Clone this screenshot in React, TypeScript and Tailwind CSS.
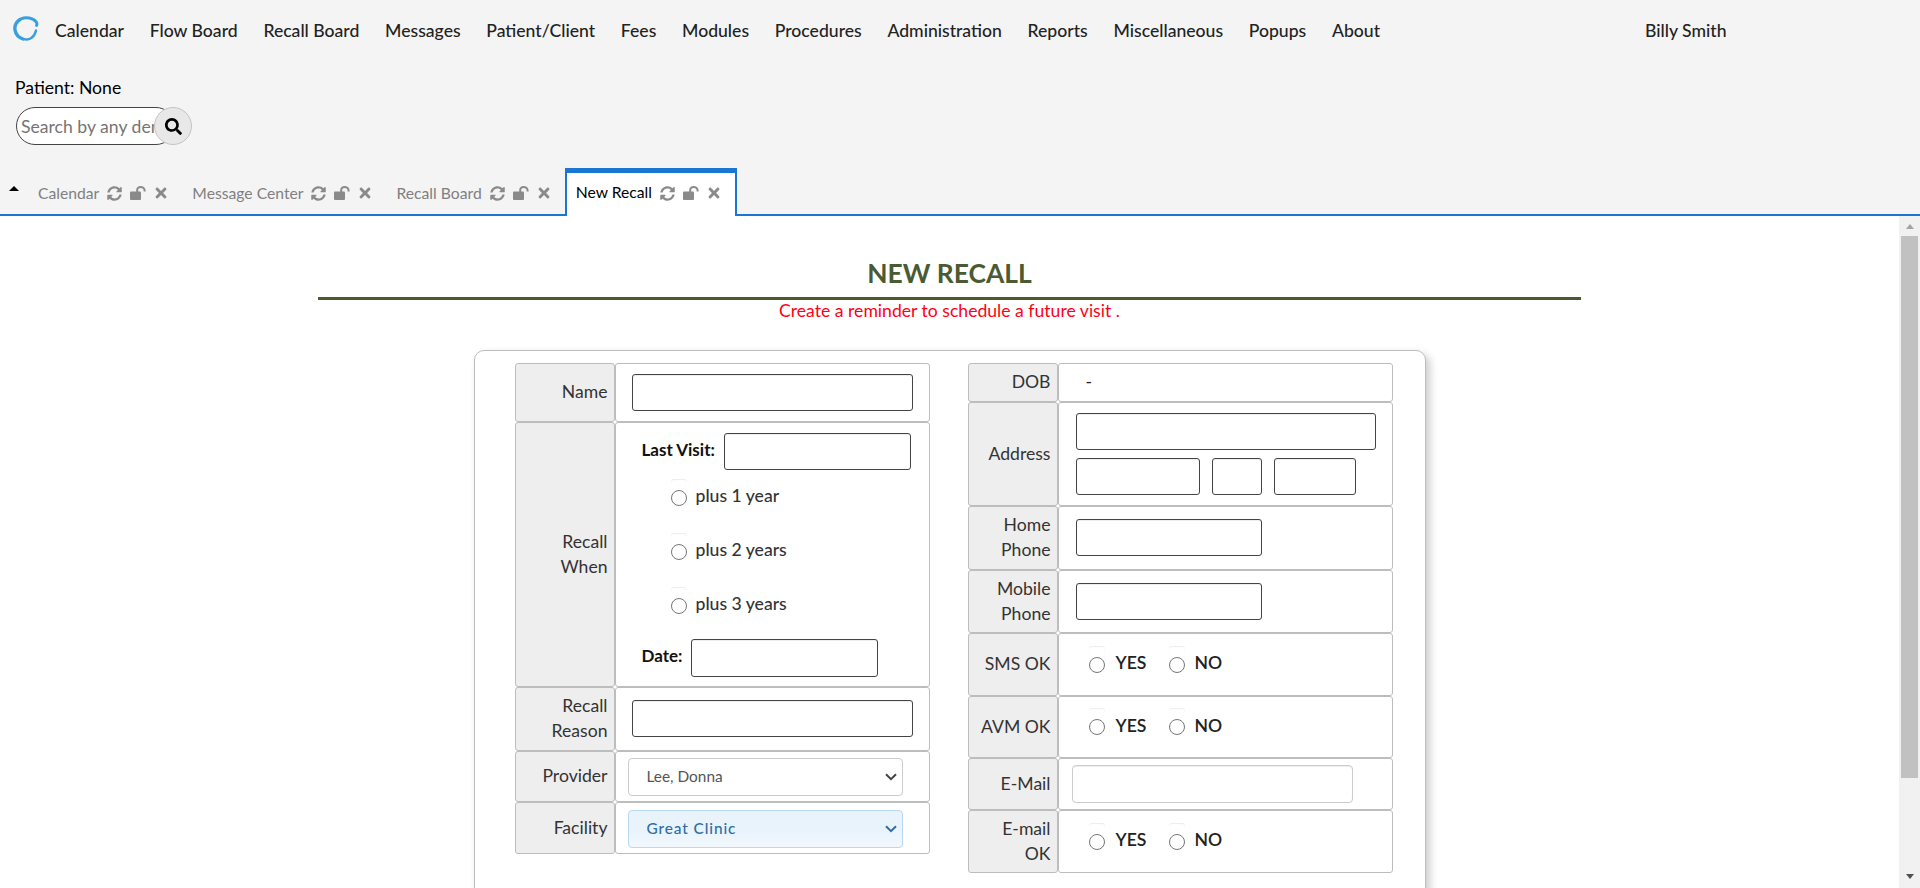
import { FaSyncAlt, FaTimes, FaSearch } from "react-icons/fa";

const navItems = [
  "Calendar",
  "Flow Board",
  "Recall Board",
  "Messages",
  "Patient/Client",
  "Fees",
  "Modules",
  "Procedures",
  "Administration",
  "Reports",
  "Miscellaneous",
  "Popups",
  "About",
];

const inputClass =
  "block h-[37px] rounded-[3px] border border-[#444] bg-white shadow-[inset_0_1px_1px_rgba(0,0,0,0.075)]";

function Logo() {
  return (
    <svg width="26" height="26" viewBox="0 0 26 26" className="shrink-0 -translate-y-[2px]" fill="none" strokeLinecap="round">
      <path d="M7 3.5 C2.5 6.5 1.5 11 2 14 C2.7 18 5.5 21.5 10 23" stroke="#3a9fdc" strokeWidth="3.4" />
      <path d="M8 2.8 C13 1 20 1.5 23.4 6.2 C24 7.2 24 8.4 23.6 9.4" stroke="#3a9fdc" strokeWidth="3" />
      <path d="M11 23.2 C16 24.5 21.5 21.5 23 14.5" stroke="#3a9fdc" strokeWidth="2.4" />
    </svg>
  );
}

function UnlockIcon() {
  return (
    <svg width="16" height="14" viewBox="0 0 16 14" className="ml-[8px] shrink-0" fill="none">
      <rect x="0" y="5.5" width="11" height="8.5" rx="1" fill="#8a8a8a" />
      <path d="M7.2 6 V4 C7.2 2.2 8.7 1 10.6 1 C12.5 1 14.6 2.2 14.6 4.5 V5.5" stroke="#8a8a8a" strokeWidth="2" />
    </svg>
  );
}

function TabIcons() {
  return (
    <span className="flex items-center text-[#8a8a8a]">
      <FaSyncAlt className="ml-[8px] text-[15px]" />
      <UnlockIcon />
      <FaTimes className="ml-[7px] text-[16px]" />
    </span>
  );
}

function Tab({ label, className }: { label: string; className: string }) {
  return (
    <div className={`flex items-center text-[15.7px] text-[#808080] ${className}`}>
      {label}
      <TabIcons />
    </div>
  );
}

function Row({
  label,
  labelWidth,
  height,
  children,
}: {
  label: string[];
  labelWidth: string;
  height: string;
  children?: React.ReactNode;
}) {
  return (
    <div className={`flex ${height}`}>
      <div
        className={`${labelWidth} flex shrink-0 flex-col justify-center rounded-[3px] border border-[#bdbdbd] bg-[#eeeeee] pb-[2px] pr-[6px] text-right leading-[25px] text-[#333]`}
      >
        {label.map((line) => (
          <span key={line}>{line}</span>
        ))}
      </div>
      <div className="min-w-0 flex-1 rounded-[3px] border border-[#bdbdbd] bg-white">{children}</div>
    </div>
  );
}

function RadioBox() {
  return (
    <span className="flex h-[38px] w-[16px] shrink-0 items-center justify-center rounded-[3px] shadow-[inset_0_1px_1px_rgba(0,0,0,0.075)]">
      <input type="radio" className="m-0 block size-4" />
    </span>
  );
}

function YesNo() {
  return (
    <div className="flex h-full items-center pl-[30px] font-semibold text-[#222]">
      <RadioBox />
      <span className="ml-[11px] w-[53px] -translate-y-[1px]">YES</span>
      <RadioBox />
      <span className="ml-[10px] -translate-y-[1px]">NO</span>
    </div>
  );
}

function PlusOption({ text }: { text: string }) {
  return (
    <div className="flex h-[38px] items-center pl-[29px] font-medium text-[#333]">
      <RadioBox />
      <span className="ml-[9px] -translate-y-[2px]">{text}</span>
    </div>
  );
}

function SelectBox({ value, className, arrow }: { value: string; className: string; arrow: string }) {
  return (
    <div className="relative w-[275px]">
      <select className={`block h-[38px] w-full appearance-none rounded-[4px] border pl-[18px] ${className}`}>
        <option>{value}</option>
      </select>
      <svg width="12" height="8" viewBox="0 0 12 8" fill="none" className="pointer-events-none absolute right-[6px] top-[15px]">
        <path d="M1 1.2 L6 6.2 L11 1.2" stroke={arrow} strokeWidth="2" />
      </svg>
    </div>
  );
}

export default function App() {
  return (
    <div className="flex h-[888px] w-[1920px] flex-col overflow-hidden bg-[#f4f4f4] font-['Lato',sans-serif] text-[17.6px]">
      <header className="flex h-[62px] items-center pl-[13px]">
        <Logo />
        <nav className="ml-[16px] flex gap-[25.7px] font-medium text-[#222]">
          {navItems.map((item) => (
            <span key={item}>{item}</span>
          ))}
        </nav>
        <span className="ml-[265px] font-medium text-[#222]">Billy Smith</span>
      </header>

      <div className="pl-[15px] leading-[20px] text-black">
        <div className="mt-[16px]">Patient: None</div>
      </div>
      <div className="mt-[9px] flex pl-[16px]">
        <input
          placeholder="Search by any demographics"
          className="h-[38px] w-[159px] rounded-full border border-[#444] bg-white pl-[4px] pr-[19px] placeholder:text-[#757575]"
        />
        <span className="relative -ml-[21px] flex size-[38px] items-center justify-center rounded-full border border-[#c4c4c4] bg-[#e8e8e8] text-black">
          <FaSearch className="text-[17px]" />
        </span>
      </div>

      <div className="mt-[22px] flex h-[49px] items-end border-b-2 border-[#1976d2]">
        <div className="flex h-[36px] items-center pb-[5px]">
          <span className="ml-[9px] h-0 w-0 -translate-y-[5px] border-x-[5px] border-b-[5px] border-x-transparent border-b-black" />
          <Tab label="Calendar" className="ml-[19px]" />
          <Tab label="Message Center" className="ml-[23px]" />
          <Tab label="Recall Board" className="ml-[23px]" />
        </div>
        <div className="relative -mb-[2px] ml-[13px] flex h-[48px] w-[172px] items-center border-x-2 border-t-[5px] border-x-[#1976d2] border-t-[#1976d2] bg-white pb-[3px] pl-[9px] text-[15.7px] text-black">
          New Recall
          <TabIcons />
        </div>
      </div>

      <main className="flex min-h-0 flex-1 bg-white">
        <div className="min-w-0 flex-1 overflow-hidden">
          <h1 className="mt-[42px] text-center text-[26.4px] font-bold uppercase leading-[30px] text-[#4a5a32]">New Recall</h1>
          <div className="mx-auto mt-[9px] h-[3px] w-[1263px] bg-[#4a5a32]" />
          <p className="text-center leading-[22px] text-[#ff0018]">Create a reminder to schedule a future visit .</p>

          <section className="mx-auto mt-[28px] flex h-[600px] w-[952px] rounded-[10px] border border-[#bdbdbd] bg-white pl-[40px] pt-[12px] shadow-[4px_4px_8px_rgba(0,0,0,0.2)]">
            <div className="w-[415px]">
              <Row label={["Name"]} labelWidth="w-[100px]" height="h-[59px]">
                <div className="flex h-full items-center pl-[16px]">
                  <input className={`${inputClass} w-[281px]`} />
                </div>
              </Row>
              <Row label={["Recall", "When"]} labelWidth="w-[100px]" height="h-[265px]">
                <div className="pl-[26px] pt-[10px]">
                  <div className="flex items-center font-bold text-[#111]">
                    <span className="w-[82px] -translate-y-[2px] text-[17px]">Last Visit:</span>
                    <input className={`${inputClass} w-[187px]`} />
                  </div>
                  <div className="mt-[9px] flex flex-col gap-[16px]">
                    <PlusOption text="plus 1 year" />
                    <PlusOption text="plus 2 years" />
                    <PlusOption text="plus 3 years" />
                  </div>
                  <div className="mt-[14px] flex items-center font-bold text-[#111]">
                    <span className="w-[49px] -translate-y-[2px] text-[17px]">Date:</span>
                    <input className={`${inputClass} h-[38px] w-[187px]`} />
                  </div>
                </div>
              </Row>
              <Row label={["Recall", "Reason"]} labelWidth="w-[100px]" height="h-[64px]">
                <div className="flex h-full items-center pb-[1px] pl-[16px]">
                  <input className={`${inputClass} w-[281px]`} />
                </div>
              </Row>
              <Row label={["Provider"]} labelWidth="w-[100px]" height="h-[51px]">
                <div className="flex h-full items-center pl-[12px]">
                  <SelectBox value="Lee, Donna" arrow="#444" className="border-[#ccc] bg-white text-[15.4px] text-[#555]" />
                </div>
              </Row>
              <Row label={["Facility"]} labelWidth="w-[100px]" height="h-[52px]">
                <div className="flex h-full items-center pl-[12px] pt-[2px]">
                  <SelectBox
                    value="Great Clinic"
                    arrow="#2f6da3"
                    className="border-[#b9d9f2] bg-gradient-to-b from-[#e8f3fc] from-50% to-[#f2f8fd] text-[15.4px] font-medium tracking-[0.9px] text-[#2f6da3]"
                  />
                </div>
              </Row>
            </div>

            <div className="ml-[38px] w-[425px]">
              <Row label={["DOB"]} labelWidth="w-[90px]" height="h-[39px]">
                <div className="flex h-full items-center pl-[27px] text-[#222]">-</div>
              </Row>
              <Row label={["Address"]} labelWidth="w-[90px]" height="h-[104px]">
                <div className="pl-[17px] pt-[10px]">
                  <input className={`${inputClass} w-[300px]`} />
                  <div className="mt-[8px] flex">
                    <input className={`${inputClass} w-[124px]`} />
                    <input className={`${inputClass} ml-[12px] w-[50px]`} />
                    <input className={`${inputClass} ml-[12px] w-[82px]`} />
                  </div>
                </div>
              </Row>
              <Row label={["Home", "Phone"]} labelWidth="w-[90px]" height="h-[64px]">
                <div className="flex h-full items-center pb-[1px] pl-[17px]">
                  <input className={`${inputClass} w-[186px]`} />
                </div>
              </Row>
              <Row label={["Mobile", "Phone"]} labelWidth="w-[90px]" height="h-[63px]">
                <div className="flex h-full items-center pl-[17px]">
                  <input className={`${inputClass} w-[186px]`} />
                </div>
              </Row>
              <Row label={["SMS OK"]} labelWidth="w-[90px]" height="h-[63px]">
                <YesNo />
              </Row>
              <Row label={["AVM OK"]} labelWidth="w-[90px]" height="h-[62px]">
                <YesNo />
              </Row>
              <Row label={["E-Mail"]} labelWidth="w-[90px]" height="h-[52px]">
                <div className="flex h-full items-center pl-[13px]">
                  <input className="block h-[38px] w-[281px] rounded-[4px] border border-[#ccc] bg-white shadow-[inset_0_1px_1px_rgba(0,0,0,0.075)]" />
                </div>
              </Row>
              <Row label={["E-mail", "OK"]} labelWidth="w-[90px]" height="h-[63px]">
                <YesNo />
              </Row>
            </div>
          </section>
        </div>

        <div className="flex w-[21px] shrink-0 flex-col bg-[#f1f1f1] px-[2px]">
          <div className="flex h-[20px] items-center justify-center">
            <span className="h-0 w-0 border-x-[4px] border-b-[5px] border-x-transparent border-b-[#a3a3a3]" />
          </div>
          <div className="h-[542px] bg-[#c1c1c1]" />
          <div className="mt-auto flex h-[24px] items-center justify-center">
            <span className="h-0 w-0 border-x-[4.5px] border-t-[5px] border-x-transparent border-t-[#505050]" />
          </div>
        </div>
      </main>
    </div>
  );
}
